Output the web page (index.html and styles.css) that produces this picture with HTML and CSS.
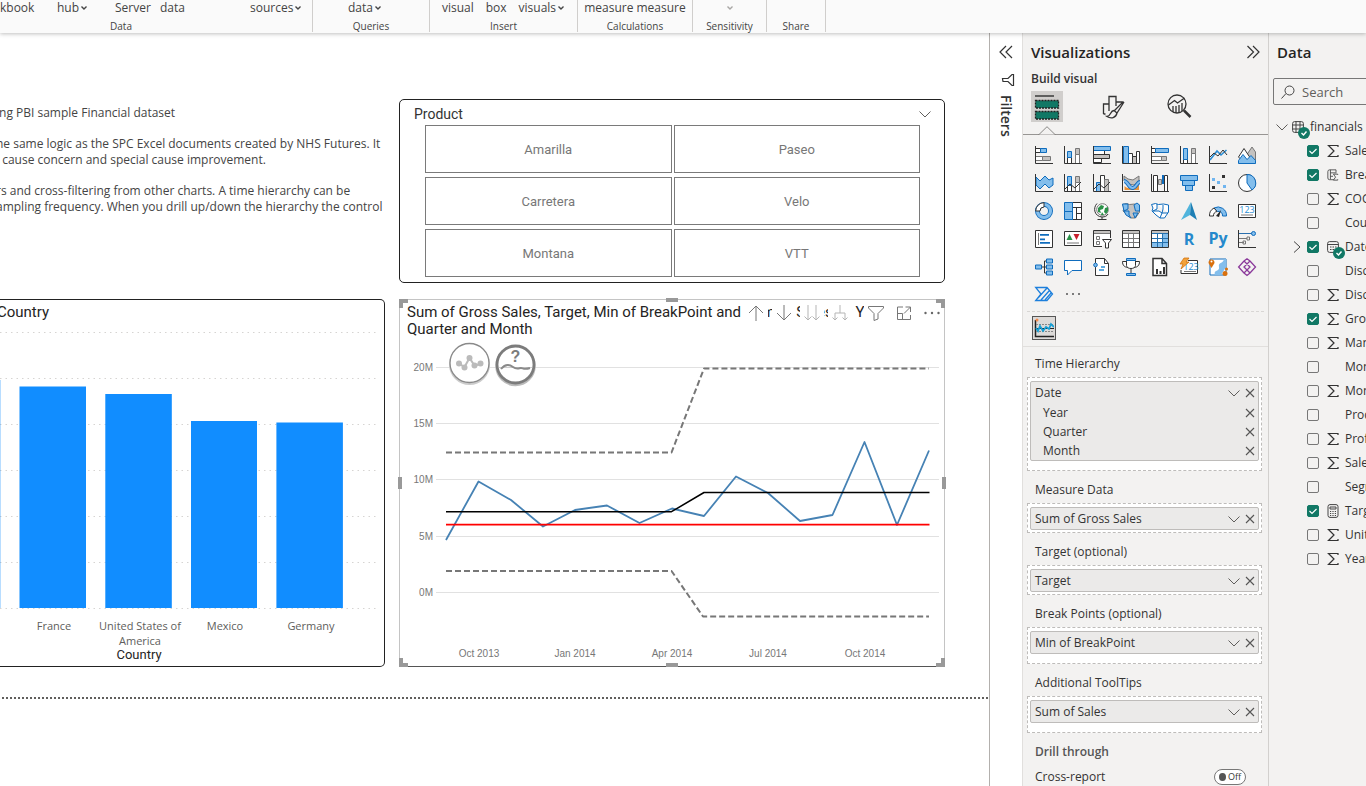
FILE: index.html
```html
<!DOCTYPE html>
<html lang="en">
<head>
<meta charset="utf-8">
<title>Report editor</title>
<link rel="stylesheet" href="styles.css">
</head>
<body>
<svg class="defs" aria-hidden="true">
  <symbol id="chev" viewBox="0 0 12 8"><path d="M.5 1.500 6 7l5.500-5.500" fill="none" stroke="currentColor"/></symbol>
  <symbol id="chev-s" viewBox="0 0 8 8"><path d="M1.500 2.500 4 5l2.500-2.500" fill="none" stroke="currentColor" stroke-width="1.400"/></symbol>
  <symbol id="x" viewBox="0 0 10 10"><path d="M1 1l8 8M9 1 1 9" fill="none" stroke="currentColor" stroke-width="1.100"/></symbol>
  <symbol id="sigma" viewBox="0 0 12 14"><path d="M11 3V1.500H1.500L7 7l-5.500 5.500H11V11" fill="none" stroke="currentColor" stroke-width="1.200"/></symbol>
  <symbol id="ok" viewBox="0 0 12 12"><circle cx="6" cy="6" r="6" fill="#117865"/><path d="M3.500 6l2 2 3-3.500" fill="none" stroke="#fff" stroke-width="1.400"/></symbol>
</svg>

<header class="ribbon">
  <section class="group group-data">
    <div class="cmds cmds-data">
      <button>kbook</button><button>hub<svg class="i8"><use href="#chev-s"/></svg></button><button>Server</button><button>data</button><button>sources<svg class="i8"><use href="#chev-s"/></svg></button>
    </div>
    <h2>Data</h2>
  </section>
  <section class="group group-queries">
    <div class="cmds"><button>data<svg class="i8"><use href="#chev-s"/></svg></button></div>
    <h2>Queries</h2>
  </section>
  <section class="group group-insert">
    <div class="cmds"><button>visual</button><button>box</button><button>visuals<svg class="i8"><use href="#chev-s"/></svg></button></div>
    <h2>Insert</h2>
  </section>
  <section class="group group-calc">
    <div class="cmds"><button>measure</button><button>measure</button></div>
    <h2>Calculations</h2>
  </section>
  <section class="group group-sens">
    <div class="cmds"><button class="off" aria-label="Sensitivity"><svg class="i8"><use href="#chev-s"/></svg></button></div>
    <h2>Sensitivity</h2>
  </section>
  <section class="group group-share">
    <div class="cmds"></div>
    <h2>Share</h2>
  </section>
</header>

<main class="work">
  <div class="canvas">
    <div class="page">
      <div class="note">
        <p>ing PBI sample Financial dataset</p>
        <p>he same logic as the SPC Excel documents created by NHS Futures. It<br>l cause concern and special cause improvement.</p>
        <p>rs and cross-filtering from other charts. A time hierarchy can be<br>ampling frequency. When you drill up/down the hierarchy the control</p>
      </div>

      <section class="card slicer">
        <header><h3>Product</h3><button aria-label="Options"><svg class="chev"><use href="#chev"/></svg></button></header>
        <div class="tiles">
          <button>Amarilla</button><button>Paseo</button>
          <button>Carretera</button><button>Velo</button>
          <button>Montana</button><button>VTT</button>
        </div>
      </section>

      <section class="card bars">
        <h3 class="title">Country</h3>
        <svg viewBox="0 321 384 345" role="img" aria-label="Bar chart by country">
          <path class="dots" d="M0 332.500H377M0 378.500H377M0 424.500H377M0 470.500H377M0 516.500H377M0 562.500H377M0 608.500H377"/>
          <g fill="#118dff">
            <rect x="-10" y="380" width="10.300" height="228"/>
            <rect x="19.500" y="386.500" width="66.500" height="221.500"/>
            <rect x="105.300" y="394" width="66.500" height="214"/>
            <rect x="191" y="421" width="66" height="187"/>
            <rect x="276.400" y="422.500" width="66.500" height="185.500"/>
          </g>
          <g class="cat">
            <text x="54" y="630">France</text>
            <text x="140" y="630">United States of</text><text x="140" y="645">America</text>
            <text x="225" y="630">Mexico</text>
            <text x="311" y="630">Germany</text>
          </g>
          <text class="axis" x="139" y="659">Country</text>
        </svg>
      </section>

      <section class="card spc">
        <h3 class="title">Sum of Gross Sales, Target, Min of BreakPoint and Sum of Sales by Year, Quarter and Month</h3>
        <svg viewBox="400 338 544 328" role="img" aria-label="Control chart">
          <path stroke="#e1e1e1" d="M436 367.500H939M436 423.500H939M436 479.500H939M436 536.500H939M436 592.500H939"/>
          <g class="tick" text-anchor="end"><text x="433" y="371">20M</text><text x="433" y="427">15M</text><text x="433" y="483">10M</text><text x="433" y="540">5M</text><text x="433" y="596">0M</text></g>
          <g class="tick" text-anchor="middle"><text x="479" y="657">Oct 2013</text><text x="575" y="657">Jan 2014</text><text x="672" y="657">Apr 2014</text><text x="768" y="657">Jul 2014</text><text x="865" y="657">Oct 2014</text></g>
          <g fill="none" stroke-linejoin="round">
            <g stroke="#777" stroke-width="2" stroke-dasharray="6 3"><path d="M446 452.500H671.500L704 368.500H929"/><path d="M446 571H671.500L703 616.500H929"/></g>
            <path stroke="#4682b4" stroke-width="1.800" d="M446 540 478.500 481.500 511 500 543 526.500 575 510 607 505.500 639.500 523 672 508.500 704 516 736 476.500 768 493 800 521 832.500 515 864.500 442 897 525 929 450.500"/>
            <path stroke="#ff0000" stroke-width="1.800" d="M446 524.700H929.500"/>
            <path stroke="#000" stroke-width="1.500" d="M446 511.700H671.500L704 492.500H929.500"/>
          </g>
          <g>
            <circle cx="469.500" cy="364.500" r="19.500" fill="none" stroke="#ccc" stroke-width="2"/>
            <circle cx="469.500" cy="363" r="19.500" fill="#fff" stroke="#8a8a8a" stroke-width="1.300"/>
            <path d="M459 363.500l5.500 3.500 5-9 5 7.500 6-1.500" fill="none" stroke="#bbb" stroke-width="2"/>
            <g fill="#bbb"><circle cx="459" cy="363.500" r="3"/><circle cx="464.500" cy="367.500" r="3"/><circle cx="469.500" cy="358" r="3"/><circle cx="474.500" cy="365.500" r="3"/><circle cx="480.500" cy="363.500" r="3"/></g>
            <circle cx="515.500" cy="366" r="19" fill="none" stroke="#bbb" stroke-width="2.500"/>
            <circle cx="515.500" cy="364.500" r="18.500" fill="#fff" stroke="#7c7c7c" stroke-width="2.800"/>
            <path d="M499 367.500H532" stroke="#ccc" fill="none"/>
            <path d="M501 369c4-5 8-5 12-2s6 1 8 1 3 2 9 0" fill="none" stroke="#8a8a8a" stroke-width="2"/>
            <text class="help" x="515.500" y="362">?</text>
          </g>
        </svg>
        <div class="tools">
          <button aria-label="Drill up"><svg viewBox="0 0 18 18"><path d="M9 17V2M2 9l7-7 7 7"/></svg></button>
          <button aria-label="Drill down"><svg viewBox="0 0 18 18"><path d="M9 1v15M2 9l7 7 7-7"/></svg></button>
          <button class="dim" aria-label="Next level"><svg viewBox="0 0 18 18"><path d="M5 1v15M1.500 12.500 5 16l3.500-3.500M13 1v15M9.500 12.500 13 16l3.500-3.500"/></svg></button>
          <button class="dim" aria-label="Expand level"><svg viewBox="0 0 18 18"><path d="M9 1v8M4 16V9h10v7M1.500 13.500 4 16l2.500-2.500M11.500 13.500 14 16l2.500-2.500"/></svg></button>
          <button class="gap" aria-label="Filter"><svg viewBox="0 0 18 18"><path d="M1.500 2.500h15v1.500L11 9.500V15l-4 1.500v-7L1.500 4z"/></svg></button>
          <button aria-label="Focus mode"><svg viewBox="0 0 18 18"><path d="M8 3H2.500v12.500h13V11M2.500 9.500h5v6M10.500 3h5v5M15.500 3 9 9.500"/></svg></button>
          <button class="more" aria-label="More options"><svg viewBox="0 0 18 18"><g class="fill"><circle cx="2.500" cy="9" r="1.200"/><circle cx="9" cy="9" r="1.200"/><circle cx="15.500" cy="9" r="1.200"/></g></svg></button>
        </div>
        <i class="h tl"></i><i class="h tr"></i><i class="h bl"></i><i class="h br"></i>
        <i class="h t"></i><i class="h b"></i><i class="h l"></i><i class="h r"></i>
      </section>
    </div>
    <div class="pagebreak"></div>
  </div>

  <aside class="filters">
    <button aria-label="Expand filters"><svg width="14" height="14" viewBox="0 0 14 14"><path d="M7 1 1 7l6 6M13 1 7 7l6 6"/></svg></button>
    <svg width="14" height="14" viewBox="0 0 14 14"><path d="M12.500 1.500v11H11L7 8.500H2L1.500 5.500H7L11 1.500z"/></svg>
    <h2>Filters</h2>
  </aside>

  <aside class="viz">
    <header><h2>Visualizations</h2><button aria-label="Collapse"><svg width="14" height="14" viewBox="0 0 14 14"><path d="M1.500 1l6 6-6 6M7 1l6 6-6 6" fill="none" stroke="#333" stroke-width="1.200"/></svg></button></header>
    <h3>Build visual</h3>
    <nav class="tabs">
      <button class="on" aria-label="Build"><svg width="26" height="26" viewBox="0 0 26 26"><path d="M1 2H20" stroke="#222" stroke-width="1.300"/><g fill="#117865" stroke="#222" stroke-width="1.300" stroke-dasharray="2 1"><rect x="1.500" y="6.500" width="23" height="7.500"/><rect x="1.500" y="17.500" width="23" height="7.500"/></g></svg><svg class="notch" viewBox="0 0 18 9"><path d="M0 8.500h1L9 .700l8 7.800h1"/></svg></button>
      <button aria-label="Format"><svg width="24" height="26" viewBox="0 0 24 26"><g fill="none" stroke="#333" stroke-width="1.300"><path d="M2.500 20V10H8M8 17V2.500h7V12M15 8h6v1M2.500 20h2"/><path d="M22.500 7.500 13 17M23 8l-7 11-3-2.500M13 16.500c-4 0-3 6-7 6 4 2.500 9 1.500 10-3.500"/></g></svg></button>
      <button aria-label="Analytics"><svg width="26" height="26" viewBox="0 0 26 26"><g fill="none" stroke="#333" stroke-width="1.300"><circle cx="11" cy="10" r="9"/><path d="M2.500 11l6-4.500 3 2.500 7-5M7 18v-6M10 19v-7M13 19v-8M16 17v-8"/><path d="M18 16.500l6.500 6.500" stroke-width="2.500"/></g></svg></button>
    </nav>

    <div class="gallery">
      <button aria-label="Stacked bar"><svg viewBox="0 0 18 18"><path class="g w" d="M.5 10.500h7v4h-7z"/><path class="g fg" d="M7.500 10.500h8v4h-8z"/><path class="k w" d="M.5 2.500h5v4h-5z"/><path class="b" d="M5.500 2.500h6v4h-6z"/><path class="k" d="M.5 0v17.500H18"/></svg></button>
      <button aria-label="Stacked column"><svg viewBox="0 0 18 18"><path class="k w" d="M3.500 11.500h4v6h-4z"/><path class="b" d="M3.500 5.500h4v6h-4z"/><path class="g w" d="M11.500 8.500h4v9h-4z"/><path class="g fg" d="M11.500 2.500h4v6h-4z"/><path class="k" d="M.5 0v17.500H18"/></svg></button>
      <button aria-label="Clustered bar"><svg viewBox="0 0 18 18"><path class="k w" d="M.5 4.500h11v4H.5zM.5 12.500h8v4h-8z"/><path class="k fg" d="M.5 8.500h16v4H.5z"/><path class="b" d="M.5.500h17v4H.500z"/><path class="k" d="M.5 0v17.500H18"/></svg></button>
      <button aria-label="Clustered column"><svg viewBox="0 0 18 18"><path class="k w" d="M6.500 7.500h4v10h-4zM14.500 5.500h3v12h-3z"/><path class="k fg" d="M10.500 10.500h4v7h-4z"/><path class="b" d="M1.500.500h5v17h-5z"/><path class="k" d="M.5 0v17.500H18"/></svg></button>
      <button aria-label="100% bar"><svg viewBox="0 0 18 18"><path class="g w" d="M.5 10.500h10v4H.5z"/><path class="g fg" d="M10.500 10.500h5v4h-5z"/><path class="k w" d="M.5 2.500h4v4h-4z"/><path class="b" d="M4.500 2.500h13v4h-13z"/><path class="k" d="M.5 0v17.500H18"/></svg></button>
      <button aria-label="100% column"><svg viewBox="0 0 18 18"><path class="k w" d="M3.500 13.500h4v4h-4z"/><path class="b" d="M3.500 2.500h4v11h-4z"/><path class="g w" d="M11.500 7.500h4v10h-4z"/><path class="g fg" d="M11.500 2.500h4v5h-4z"/><path class="k" d="M.5 0v17.500H18"/></svg></button>
      <button aria-label="Line"><svg viewBox="0 0 18 18"><path d="M1 14 8 5l4 4 5.500-5" fill="none" stroke="#2a8dd4" stroke-width="1.600"/><path class="k" d="M1 11l4-4 4 3 5-6 4 5"/><path class="k" d="M.5 0v17.500H18"/></svg></button>
      <button aria-label="Area"><svg viewBox="0 0 18 18"><path class="g fg" d="M8 10l6-9 3.500 5v11z"/><path class="k w" d="M.5 11 6 2.500l6 9-6 5z"/><path class="b" d="M.5 17.500v-3L5 8.500l4 5 4-4 4.500 5v3z"/></svg></button>

      <button aria-label="Stacked area"><svg viewBox="0 0 18 18"><path class="b" d="M1 3l4 4 5-5 4 4 4-2v7l-4 3-4-4-5 5-4-4z"/><path class="k" d="M.5 0v17.500H18"/></svg></button>
      <button aria-label="Line and stacked column"><svg viewBox="0 0 18 18"><path class="k w" d="M3.500 11.500h4v6h-4z"/><path class="b" d="M3.500 2.500h4v9h-4z"/><path class="g w" d="M11.500 8.500h4v9h-4z"/><path class="g fg" d="M11.500 2.500h4v6h-4z"/><path class="k" d="M.5 0v17.500H18M1 15l5-5 5 4 6-6"/></svg></button>
      <button aria-label="Line and clustered column"><svg viewBox="0 0 18 18"><path class="b" d="M3.500 8.500h4v9h-4z"/><path class="k w" d="M7.500 1.500h4v16h-4z"/><path class="g fg" d="M11.500 5.500h4v12h-4z"/><path class="k" d="M.5 0v17.500H18M1 15l5-5 5 4 6-6"/></svg></button>
      <button aria-label="Ribbon"><svg viewBox="0 0 18 18"><path class="g fg" d="M2 2l4 3 5 1 6-4v5l-5 4-6-1-4-3z"/><path d="M2.500 12c5 5 10 0 14.500-1v5H2.500z" fill="#e8923a"/><path d="M2 7c4 0 5 8 9 7s4-6 7-6" fill="none" stroke="#1a6fbf" stroke-width="4"/><path d="M2 7c4 0 5 8 9 7s4-6 7-6" fill="none" stroke="#7fbcf0" stroke-width="2"/><path class="k" d="M.5 0v17.500H18"/></svg></button>
      <button aria-label="Waterfall"><svg viewBox="0 0 18 18"><path class="k w" d="M2.500 1.500h4v16h-4zM13.500 1.500h3v16h-3z"/><path class="g fg" d="M7.500 5.500h3v5h-3z"/><path d="M11 1h2v9h-2z" fill="#0f6cbd"/><path class="k" d="M.5 0v17.500H18"/></svg></button>
      <button aria-label="Funnel"><svg viewBox="0 0 18 18"><path class="b" d="M.5 1.500h17v5H.500zM2.500 6.500h12v5h-12zM5.500 11.500h7v5h-7z"/></svg></button>
      <button aria-label="Scatter"><svg viewBox="0 0 18 18"><path d="M3 4h3v3H3zM8 7h3v3H8zM14 11h3v3h-3z" fill="#70b5ef"/><path d="M13 1h3v3h-3zM3 12h3v3H3z" fill="#333"/><path class="k" d="M.5 0v17.500H18"/></svg></button>
      <button aria-label="Pie"><svg viewBox="0 0 18 18"><circle class="k w" cx="9" cy="9" r="8.500"/><path class="b" d="M9 9V.500A8.500 8.500 0 0 1 14 16z"/></svg></button>

      <button aria-label="Donut"><svg viewBox="0 0 18 18"><circle cx="9" cy="9" r="6.500" fill="none" stroke="#0f6cbd" stroke-width="5"/><circle cx="9" cy="9" r="6.500" fill="none" stroke="#83beec" stroke-width="3.200"/><path class="k w" d="M.7 9A8.300 8.300 0 0 1 9 .700V5a4 4 0 0 0-4 4z"/></svg></button>
      <button aria-label="Treemap"><svg viewBox="0 0 18 18"><path class="k w" d="M8.500.500h9v17h-9zM8.500 5.500h9M12.500 5.500v12M12.500 11.500h5"/><path class="b" d="M.5.500h8v9h-8zM.500 9.500h8v8h-8z"/></svg></button>
      <button aria-label="Map"><svg viewBox="0 0 18 18"><circle class="g w" cx="9.500" cy="7.500" r="5.800"/><path d="M5 6l3-3 3 1-1 3-3 1 1 3-3-1zM12 6l3-1v4l-2 3-2-2zM9 10l2 3H8z" fill="#2a9147"/><path class="k" d="M4 1.500C-.5 6 1.500 14.500 9 15c3 0 5-1 6-3M9 15v2.500M4.500 17.500h9"/></svg></button>
      <button aria-label="Filled map"><svg viewBox="0 0 18 18"><path class="g fg" d="M.5 2.500l4-1 3 1 5-.500 5 1v7l-4 6H9l-4-3-4-4 1-3z"/><path class="b" d="M.5 2 6 2v5L2 9zM12 3l3-2 2.500 2v6h-4zM2 9h5v4L9 16l-5-3zM11 11h5l-3 5z"/></svg></button>
      <button aria-label="Shape map"><svg viewBox="0 0 18 18"><path class="b w" d="M.5 2.500l4-1 3 1 5-.500 5 1v7l-4 6H9l-4-3-4-4 1-3zM6 2v5L2 9h6l3 2h6M12 3v4l-1 4-2 5"/></svg></button>
      <button aria-label="Azure map"><svg viewBox="0 0 18 18"><path d="M11 0 1 18l9-5z" fill="#50b4dc"/><path d="M11 0l6 18-7-5z" fill="#1d7fb5"/></svg></button>
      <button aria-label="Gauge"><svg viewBox="0 0 18 18"><path class="b" d="M5 6a8.500 8.500 0 0 1 12.500 8h-4a4 4 0 0 0-5-4.500z"/><path class="k w" d="M.5 14A8.500 8.500 0 0 1 5 6l3 3.500A4 4 0 0 0 4.500 14z"/><path d="M7 14l5-6-2 7z" fill="#222"/></svg></button>
      <button aria-label="Card"><svg viewBox="0 0 18 18"><path class="k w" d="M.5 2.500h17v13H.500z"/><text class="n" x="9" y="11">123</text><path class="g" d="M3 13h12"/></svg></button>

      <button aria-label="Multi-row card"><svg viewBox="0 0 18 18"><path class="k w" d="M.5.500h17v17H.500z"/><path class="g" d="M3.500 3v12"/><path d="M5 4h9v1.800H5zM5 8.500h5v1.800H5zM5 12h10v1.800H5z" fill="#0f6cbd"/></svg></button>
      <button aria-label="KPI"><svg viewBox="0 0 18 18"><path class="k w" d="M.5 1.500h17v14H.500z"/><path d="M2.500 10 5.500 4l3 6z" fill="#2a9147"/><path d="M9.500 4h6l-3 6z" fill="#c8202c"/><path class="g" d="M3 13h12"/></svg></button>
      <button aria-label="Slicer"><svg viewBox="0 0 18 18"><path class="k w" d="M9 16.500H.500V.500h17V8"/><path d="M1 1h16v2.500H1z" fill="#c4c2c0"/><path class="g" d="M1 3.500h16M3.500 6.500h3v3h-3zM3.500 11.500h3v3h-3z"/><path class="k w" d="M9.500 9.500h9l-3 3.500v5h-3v-5z"/></svg></button>
      <button aria-label="Table"><svg viewBox="0 0 18 18"><path class="k w" d="M.5.500h17v17H.500z"/><path d="M1 1h16v2.500H1z" fill="#c4c2c0"/><path class="g" d="M1 3.500h16M1 8.500h16M1 12.500h16M6.500 4v13M11.500 4v13"/></svg></button>
      <button aria-label="Matrix"><svg viewBox="0 0 18 18"><path class="k w" d="M.5.500h17v17H.500z"/><path d="M1 1h16v2.500H1z" fill="#c4c2c0"/><path d="M12 4h5v13H1v-4h11z" fill="#83beec"/><path d="M1 3.500h16M1 8.500h16M1 12.500h16M6.500 4v13M11.500 4v13" fill="none" stroke="#2470ad"/></svg></button>
      <button aria-label="R script"><svg viewBox="0 0 18 18"><text class="s" x="9" y="15">R</text></svg></button>
      <button aria-label="Python script"><svg viewBox="0 0 18 18"><text class="s" x="9" y="14">Py</text></svg></button>
      <button aria-label="Key influencers"><svg viewBox="0 0 18 18"><path d="M1 3.500h13" stroke="#2a6fae"/><circle class="b" cx="15.500" cy="3.500" r="2"/><path class="g" d="M1 8.500h8M1 12.500h5M9 7h2.500v3H9zM5 11h2.500v3H5z"/><path class="k" d="M.5 0v17.500H18"/></svg></button>

      <button aria-label="Decomposition tree"><svg viewBox="0 0 18 18"><path class="k" d="M6 9h6M12 3H9.500v12H12"/><path class="b" d="M.5 7h6v4h-6zM11.500 1h6v4h-6zM11.500 7h6v4h-6zM11.500 13h6v4h-6z"/></svg></button>
      <button aria-label="Q&amp;A"><svg viewBox="0 0 18 18"><path class="b w" d="M.5 2.500h17v10H8L3.500 17v-4.500h-3z"/></svg></button>
      <button aria-label="Narrative"><svg viewBox="0 0 18 18"><path class="k w" d="M2.500 9v8.500h13v-12l-4-5h-9V5M11.500.500v5h4"/><circle class="b" cx="2.500" cy="7" r="1.800"/><path d="M8 9h4M6 12h5" stroke="#2a8dd4" stroke-width="1.300"/></svg></button>
      <button aria-label="Goals"><svg viewBox="0 0 18 18"><path class="k w" d="M4.500 2.500h9v5c0 4-9 4-9 0zM4.500 3.500h-4c0 4 2 5.500 5 6M13.500 3.500h4c0 4-2 5.500-5 6M9 11v5"/><path class="b" d="M4.500.500h9v2h-9zM4.500 15.500h9v2h-9z"/></svg></button>
      <button aria-label="Paginated report"><svg viewBox="0 0 18 18"><path class="k w" stroke-width="1.500" d="M2 .500h9l4.500 5v12H2zM11 .500v5h4.500"/><path d="M5 11h2v5H5zM8.500 13h2v3h-2zM12 9h2v7h-2z" fill="#333"/></svg></button>
      <button aria-label="New card"><svg viewBox="0 0 18 18"><path class="k w" d="M8 2.500h9.500v13H1V12"/><text class="n" x="11" y="12">123</text><path class="g" d="M4 13.500h12"/><path d="M4 0h5L6 4h3l-8 7 2-5H0z" fill="#f2a33c" stroke="#d06b00" stroke-width=".7"/></svg></button>
      <button aria-label="ArcGIS"><svg viewBox="0 0 18 18"><path class="b w" d="M1 1h16v16H1z"/><path d="M6 17c-2-6 5-3 4-8s4-3 5-8h2v8l-5 8z" fill="#83beec"/><path d="M2.500 10l-3-5a3 3.500 0 1 1 6 0z" fill="#d9700c"/><circle cx="2.500" cy="3.500" r="1" fill="#fff"/><circle cx="16" cy="15.500" r="2.500" fill="#d9700c"/><circle cx="17.500" cy="11" r="1.500" fill="#d9700c"/></svg></button>
      <button aria-label="Power Apps"><svg viewBox="0 0 18 18"><g fill="none" stroke="#8b3a9b" stroke-width="1.300"><path d="M6 3 9 .700 12 3l5.500 6L12 15l-3 2.500L6 15 .600 9zM6 3l6 6-6 6M12 3 6 9l6 6"/></g></svg></button>

      <button aria-label="Power Automate"><svg viewBox="0 0 18 18"><path d="M.7 1.500H12L17.500 8 12 14.500H.700L6 8zM3 12 12 2M6 14l8-9M10 14l6-7" fill="none" stroke="#1c7fdc" stroke-width="1.300"/></svg></button>
      <button aria-label="More visuals"><svg viewBox="0 0 18 18"><g fill="#555"><circle cx="3" cy="8" r="1"/><circle cx="9" cy="8" r="1"/><circle cx="15" cy="8" r="1"/></g></svg></button>
    </div>

    <div class="custom"><button aria-label="SPC chart"><svg width="20" height="20" viewBox="0 0 20 20"><path fill="#dcdad8" d="M0 0h20v20H0z"/><path d="M1.500 2v16.500H20" fill="none" stroke="#222" stroke-width="1.500"/><path d="M2 6.500h18M2 13.500h18" stroke="#888" stroke-dasharray="2 1"/><path d="M2 10.500h18" stroke="#222"/><path d="M2 10l2 3 2-5 3 5 3-4 3 2 2-5 3 3" fill="none" stroke="#169fd5" stroke-width="1.800"/><circle cx="3" cy="2" r="1.500" fill="#f58b4c"/></svg></button></div>

    <div class="wells">
      <h4>Time Hierarchy</h4>
      <div class="well roomy"><div class="chip">
        <div class="row head"><span>Date</span><button aria-label="Options"><svg class="chev"><use href="#chev"/></svg></button><button aria-label="Remove"><svg class="x"><use href="#x"/></svg></button></div>
        <div class="row sub"><span>Year</span><button aria-label="Remove"><svg class="x"><use href="#x"/></svg></button></div>
        <div class="row sub"><span>Quarter</span><button aria-label="Remove"><svg class="x"><use href="#x"/></svg></button></div>
        <div class="row sub"><span>Month</span><button aria-label="Remove"><svg class="x"><use href="#x"/></svg></button></div>
      </div></div>
      <h4>Measure Data</h4>
      <div class="well"><div class="chip"><div class="row head"><span>Sum of Gross Sales</span><button aria-label="Options"><svg class="chev"><use href="#chev"/></svg></button><button aria-label="Remove"><svg class="x"><use href="#x"/></svg></button></div></div></div>
      <h4>Target (optional)</h4>
      <div class="well"><div class="chip"><div class="row head"><span>Target</span><button aria-label="Options"><svg class="chev"><use href="#chev"/></svg></button><button aria-label="Remove"><svg class="x"><use href="#x"/></svg></button></div></div></div>
      <h4>Break Points (optional)</h4>
      <div class="well roomy"><div class="chip"><div class="row head"><span>Min of BreakPoint</span><button aria-label="Options"><svg class="chev"><use href="#chev"/></svg></button><button aria-label="Remove"><svg class="x"><use href="#x"/></svg></button></div></div></div>
      <h4>Additional ToolTips</h4>
      <div class="well roomy"><div class="chip"><div class="row head"><span>Sum of Sales</span><button aria-label="Options"><svg class="chev"><use href="#chev"/></svg></button><button aria-label="Remove"><svg class="x"><use href="#x"/></svg></button></div></div></div>
      <h4 class="strong">Drill through</h4>
      <div class="cross"><label for="cross">Cross-report</label><span class="toggle"><input type="checkbox" id="cross"><span>Off</span></span></div>
    </div>
  </aside>

  <aside class="data">
    <h2>Data</h2>
    <label class="search"><svg width="14" height="14" viewBox="0 0 14 14"><circle cx="8.500" cy="5.500" r="4.500"/><path d="M5 8.500.500 13.500"/></svg><input type="search" placeholder="Search" aria-label="Search"></label>
    <div class="table"><svg class="chev"><use href="#chev"/></svg><span class="ic"><svg width="12" height="12" viewBox="0 0 12 12"><rect x=".6" y=".6" width="10.800" height="10.800" rx="2"/><path d="M.6 4h10.800M.6 8h10.800M4 .600v10.800M8 .600v10.800"/></svg><svg class="badge"><use href="#ok"/></svg></span><span>financials</span></div>
    <ul class="fields">
      <li><input type="checkbox" id="f1" checked><svg class="sig"><use href="#sigma"/></svg><label for="f1">Sales</label></li>
      <li><input type="checkbox" id="f2" checked><svg class="sig" viewBox="0 0 14 14"><path d="M8 12.500H3a2 2 0 0 1-2-2V3a2 2 0 0 1 2-2h7.500v3M4 1v11M4 4.500h7M4 8.500h3"/><path d="M12.500 7V6h-5L10 9.500 7.500 13h5v-1"/></svg><label for="f2">BreakPoint</label></li>
      <li><input type="checkbox" id="f3"><svg class="sig"><use href="#sigma"/></svg><label for="f3">COGS</label></li>
      <li><input type="checkbox" id="f4"><i class="sig"></i><label for="f4">Country</label></li>
      <li class="open"><svg width="8" height="12" viewBox="0 0 8 12"><path d="M1 .500 7 6l-6 5.500"/></svg><input type="checkbox" id="f5" checked><span class="ic"><svg width="12" height="12" viewBox="0 0 12 12"><rect x=".6" y=".6" width="10.800" height="10.800" rx="2"/><path d="M.6 3.500h10.800M3 6h1.500M5.500 6H7M8 6h1.500M3 8.500h1.500M5.500 8.500H7"/></svg><svg class="badge"><use href="#ok"/></svg></span><label for="f5">Date</label></li>
      <li><input type="checkbox" id="f6"><i class="sig"></i><label for="f6">Discount Band</label></li>
      <li><input type="checkbox" id="f7"><svg class="sig"><use href="#sigma"/></svg><label for="f7">Discounts</label></li>
      <li><input type="checkbox" id="f8" checked><svg class="sig"><use href="#sigma"/></svg><label for="f8">Gross Sales</label></li>
      <li><input type="checkbox" id="f9"><svg class="sig"><use href="#sigma"/></svg><label for="f9">Manufacturing Price</label></li>
      <li><input type="checkbox" id="f10"><i class="sig"></i><label for="f10">Month Name</label></li>
      <li><input type="checkbox" id="f11"><svg class="sig"><use href="#sigma"/></svg><label for="f11">Month Number</label></li>
      <li><input type="checkbox" id="f12"><i class="sig"></i><label for="f12">Product</label></li>
      <li><input type="checkbox" id="f13"><svg class="sig"><use href="#sigma"/></svg><label for="f13">Profit</label></li>
      <li><input type="checkbox" id="f14"><svg class="sig"><use href="#sigma"/></svg><label for="f14">Sales</label></li>
      <li><input type="checkbox" id="f15"><i class="sig"></i><label for="f15">Segment</label></li>
      <li><input type="checkbox" id="f16" checked><svg class="sig" viewBox="0 0 12 14"><rect x="1" y=".600" width="10" height="12.800" rx="2"/><path d="M3 3h6v2H3zM3 7.500h1.200M5.400 7.500h1.200M7.800 7.500H9M3 9.500h1.200M5.400 9.500h1.200M7.800 9.500H9M3 11.500h1.200M5.400 11.500h1.200M7.800 11.500H9"/></svg><label for="f16">Target</label></li>
      <li><input type="checkbox" id="f17"><svg class="sig"><use href="#sigma"/></svg><label for="f17">Units Sold</label></li>
      <li><input type="checkbox" id="f18"><svg class="sig"><use href="#sigma"/></svg><label for="f18">Year</label></li>
    </ul>
  </aside>
</main>
</body>
</html>
```
FILE: styles.css
```css
:root {
  --ui: "Open Sans", "Noto Sans", sans-serif;
  --din: Roboto, "Liberation Sans", sans-serif;
  --pane: #f3f2f1;
}
* { box-sizing: border-box; }
body {
  margin: 0;
  height: 100vh;
  display: flex;
  flex-direction: column;
  overflow: hidden;
  background: #fff;
  color: #333;
  font: 12px/16px var(--ui);
}
h2, h3, h4, p, ul { margin: 0; padding: 0; font: inherit; }
button { border: 0; padding: 0; background: none; color: inherit; font: inherit; display: flex; align-items: center; }
svg { display: block; flex: none; }
.defs { position: absolute; width: 0; height: 0; }
.chev { width: 12px; height: 8px; color: #605e5c; }
.x { width: 10px; height: 10px; color: #555; }
.i8 { width: 8px; height: 8px; margin-left: 1px; }

/* ribbon */
.ribbon {
  position: relative;
  flex: none;
  display: flex;
  height: 33px;
  background: #fafafa;
  box-shadow: 0 1px 4px rgba(0, 0, 0, .25);
}
.group { height: 32px; border-right: 1px solid #d0cecc; color: #444; white-space: nowrap; }
.group h2 { font-size: 10px; line-height: 12px; margin-top: 5px; text-align: center; }
.cmds { display: flex; height: 15px; justify-content: center; }
.cmds button { height: 15px; line-height: 15px; }
.cmds-data { display: grid; grid-template-columns: 57px 58px 45px 90px 1fr; }
.group-data { width: 313px; }
.group-data h2 { padding-right: 70px; }
.group-queries { width: 117px; }
.group-queries .cmds { padding-right: 12px; }
.group-insert { width: 148px; }
.group-insert .cmds { gap: 12px; }
.group-calc { width: 115px; }
.group-calc .cmds { gap: 3px; }
.group-sens { width: 74px; }
.group-share { width: 59px; }
.off { color: #a8a6a4; }

.work { flex: 1; min-height: 0; display: flex; }

/* report canvas */
.canvas { flex: 1; min-width: 0; overflow: hidden; }
.page {
  display: grid;
  grid-template-columns: 385fr 546fr;
  gap: 16px 14px;
  padding: 66px 44px 0 0;
}
.page > * { min-width: 0; }
.note { padding-top: 6px; margin-left: -4px; white-space: nowrap; color: #444; }
.note p + p { margin-top: 15px; }
.card { position: relative; border: 1px solid #222; border-radius: 5px; background: #fff; }
.title { font: 15px/17px var(--din); color: #252423; padding: 4px 8px 0 7px; }
.card > svg { width: 100%; height: auto; }

.slicer header { display: flex; justify-content: space-between; align-items: center; height: 25px; padding: 2px 13px 0 14px; }
.slicer h3 { font: 14px/16px var(--din); color: #333; }
.tiles { display: grid; grid-template-columns: 1fr 1fr; gap: 4px 2px; padding: 0 24px 5px 25px; }
.tiles button { height: 48px; padding-top: 2px; border: 1px solid #7a7a7a; justify-content: center; font: 13px/16px var(--din); color: #777; }

.bars { border-left: 0; border-radius: 0 5px 5px 0; }
.bars .title { padding-left: 0; margin-left: -3px; }
.dots { fill: none; stroke: #d6d4d2; stroke-dasharray: 1.5 4; }
.cat { font: 11px var(--ui); fill: #605e5c; text-anchor: middle; }
.axis { font: 13px var(--din); fill: #252423; text-anchor: middle; }

.spc { border-color: #c4c4c4; border-bottom-color: #555; border-radius: 0; }
.tick { font: 10px "Liberation Sans", Arial, sans-serif; fill: #777; }
.help { font: bold 16px "Liberation Sans", Arial, sans-serif; fill: #7c7c7c; text-anchor: middle; }
.tools { position: absolute; top: 3px; right: 0; display: flex; gap: 4px; }
.tools button { width: 24px; height: 20px; justify-content: center; background: #fff; }
.tools svg { width: 18px; height: 18px; fill: none; stroke: #777; }
.tools .dim svg { stroke: #b5b5b5; }
.tools .gap { margin-left: 8px; }
.tools .fill { fill: #666; stroke: none; }
.h { position: absolute; border: 0 solid #999; width: 9px; height: 9px; }
.tl { left: -1px; top: -1px; border-width: 4px 0 0 4px; }
.tr { right: -1px; top: -1px; border-width: 4px 4px 0 0; }
.bl { left: -1px; bottom: -1px; border-width: 0 0 4px 4px; }
.br { right: -1px; bottom: -1px; border-width: 0 4px 4px 0; }
.t, .b.h { left: 50%; margin-left: -6px; width: 12px; height: 4px; background: #999; }
.t { top: -2px; }
.b.h { bottom: -1px; }
.l, .r { top: 50%; margin-top: -6px; width: 4px; height: 12px; background: #999; }
.l { left: -2px; }
.r { right: -2px; }

.pagebreak { height: 2px; margin: 30px 0 0 2px; background: repeating-linear-gradient(90deg, #605e5c 0 2px, transparent 2px 4px); }

/* filters strip */
.filters {
  flex: 0 0 34px;
  display: flex;
  flex-direction: column;
  align-items: center;
  padding-top: 12px;
  border-left: 1px solid #b3b0ad;
  border-right: 1px solid #e1dfdd;
  background: #fff;
}
.filters svg { fill: none; stroke: #333; stroke-width: 1.2; }
.filters > svg { margin: 14px 0 8px 3px; }
.filters h2 { writing-mode: vertical-rl; font-size: 14px; line-height: 18px; font-weight: 600; }

/* visualizations pane */
.viz { flex: 0 0 246px; background: var(--pane); border-right: 1px solid #d2d0ce; overflow: hidden; }
.viz > header { display: flex; justify-content: space-between; align-items: center; height: 38px; padding: 0 8px; }
.viz h2, .data h2 { font-size: 15px; line-height: 20px; font-weight: 600; color: #252423; }
.viz h3 { padding: 0 8px; font-weight: 600; font-size: 12px; line-height: 16px; }
.tabs { display: flex; gap: 34px; padding: 4px 8px 12px; border-bottom: 1px solid #979593; }
.tabs button { position: relative; width: 32px; height: 31px; justify-content: center; }
.tabs .on { background: #d0cecc; }
.notch { position: absolute; left: 7px; bottom: -13px; width: 18px; height: 9px; fill: var(--pane); stroke: #8a8886; }
.gallery { display: grid; grid-template-columns: repeat(8, 29px); grid-auto-rows: 28px; padding: 6px 0 2px 6px; }
.gallery button { justify-content: center; }
.gallery svg { width: 18px; height: 18px; overflow: visible; }
.gallery .k { fill: none; stroke: #333; }
.gallery .g { fill: none; stroke: #777; }
.gallery .b { fill: #83beec; stroke: #0f6cbd; }
.gallery .fg { fill: #c4c2c0; }
.gallery .w { fill: #fff; }
.gallery .n { font: 9px var(--ui); fill: #2a8dd4; text-anchor: middle; }
.gallery .s { font: bold 16px var(--ui); fill: #2589cc; text-anchor: middle; }
.custom { margin: 0 4px; padding: 4px 5px 6px; border-top: 1px dashed #d8d6d4; }
.custom button { width: 24px; height: 24px; border: 1px solid #555; background: #dcdad8; justify-content: center; }

.wells { padding: 0 6px 0 4px; border-top: 1px solid #e1dfdd; }
.wells h4 { padding: 11px 8px 5px; line-height: 16px; }
.wells h4:first-child { padding-top: 9px; }
.wells .strong { font-weight: 600; color: #555; }
.well { border: 1px dashed #bebcba; background: #fff; padding: 3px 2px 2px; }
.roomy { padding-bottom: 9px; }
.chip { border: 1px solid #bebcba; border-radius: 2px; background: #ebeae9; }
.row { display: flex; align-items: center; height: 19px; padding: 0 3px 0 4px; }
.head { height: 21px; }
.row span { flex: 1; }
.row .chev { margin-right: 5px; }
.sub { padding-left: 12px; }
.cross { display: flex; justify-content: space-between; align-items: center; height: 18px; margin-top: 3px; padding: 0 16px 0 8px; }
.toggle { display: flex; align-items: center; gap: 2px; height: 16px; width: 32px; padding: 0 4px; border: 1px solid #777; border-radius: 8px; background: #fff; font-size: 9px; }
.toggle input { appearance: none; margin: 0; width: 8px; height: 8px; border-radius: 50%; background: #555; }

/* data pane */
.data { flex: 0 0 97px; background: var(--pane); padding: 9px 0 0 4px; overflow: hidden; white-space: nowrap; }
.data h2 { padding: 0 4px; }
.search { display: flex; align-items: center; gap: 7px; width: 180px; height: 27px; margin-top: 16px; padding: 0 7px; border: 1px solid #777; border-radius: 2px; }
.search input { border: 0; padding: 0; width: 130px; background: none; font: 13px/18px var(--ui); }
.search input::placeholder { color: #605e5c; opacity: 1; }
.data svg { fill: none; stroke: #444; }
.table { display: flex; align-items: center; height: 24px; margin-top: 10px; padding-left: 3px; }
.table .ic { margin: 0 6px 0 4px; }
.ic { position: relative; width: 12px; height: 12px; margin-right: 6px; }
.badge { position: absolute; left: 6px; top: 6px; width: 12px; height: 12px; }
.data .badge { stroke: none; }
.fields { list-style: none; }
.fields li { display: flex; align-items: center; height: 24px; padding-left: 34px; }
.fields .open { padding-left: 20px; }
.open > svg { margin-right: 6px; }
.fields input { appearance: none; flex: none; width: 12px; height: 12px; margin: 0 8px 0 0; border: 1px solid #777; border-radius: 2px; }
.fields input:checked { border-color: #117865; background: #117865 url("data:image/svg+xml,%3Csvg xmlns='http://www.w3.org/2000/svg' viewBox='0 0 10 10'%3E%3Cpath d='M1.500 5l2.500 2.500L8.500 3' fill='none' stroke='white' stroke-width='1.200'/%3E%3C/svg%3E"); }
.sig { width: 12px; height: 14px; margin-right: 6px; flex: none; }
```
